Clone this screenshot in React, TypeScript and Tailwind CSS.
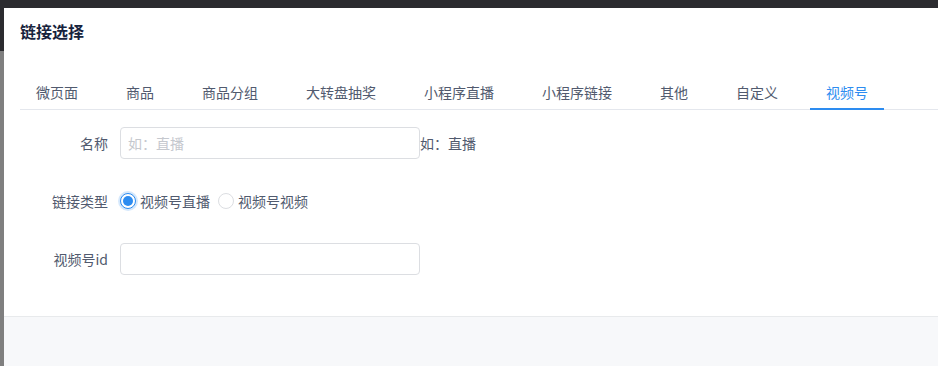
import React from 'react';

const TABS = ['微页面', '商品', '商品分组', '大转盘抽奖', '小程序直播', '小程序链接', '其他', '自定义', '视频号'];

const Radio: React.FC<{ checked?: boolean; label: string }> = ({ checked, label }) => (
  <label className="flex items-center gap-1 mr-2">
    {checked ? (
      <span className="flex items-center justify-center w-4 h-4 rounded-full border border-[#2d8cf0] bg-white shadow-[0_0_0_2px_rgba(45,140,240,0.2)]">
        <span className="w-[10px] h-[10px] rounded-full bg-[#2d8cf0]" />
      </span>
    ) : (
      <span className="w-4 h-4 rounded-full border border-[#dcdee2] bg-white" />
    )}
    <span className="text-sm text-[#515a6e]">{label}</span>
  </label>
);

const App: React.FC = () => {
  return (
    <div
      className="w-[938px] h-[366px] bg-[#2b2b2f] overflow-hidden flex flex-col"
      style={{ fontFamily: '"Noto Sans CJK SC", "Noto Sans", sans-serif' }}
    >
      <div className="h-2 shrink-0" />
      <div className="flex flex-1">
        <div className="w-1 shrink-0 flex flex-col">
          <div className="h-[43px] bg-[#2b2b2f]" />
          <div className="flex-1 bg-[#7f7f7f]" />
        </div>
        <div className="flex-1 flex flex-col bg-white">
          <div className="px-4 pt-[11px] h-[52px]">
            <h2 className="text-base font-bold text-[#17233d] leading-[24px]">链接选择</h2>
          </div>
          {/* tabs */}
          <div className="pl-4 pt-[21px]">
            <div className="flex gap-4 border-b border-[#e4e7ed]">
              {TABS.map((t) => {
                const active = t === '视频号';
                return (
                  <div
                    key={t}
                    className={`px-4 h-[29px] flex items-start text-sm leading-[22px] border-b-2 -mb-px ${
                      active ? 'text-[#2d8cf0] border-[#2d8cf0]' : 'text-[#515a6e] border-transparent'
                    }`}
                  >
                    {t}
                  </div>
                );
              })}
            </div>
          </div>
          {/* form */}
          <div className="px-4 pt-[17px] flex flex-col gap-[26px] h-[206px]">
            <div className="flex items-center h-8">
              <div className="w-[100px] pr-3 text-right text-sm text-[#515a6e]">名称</div>
              <input
                className="w-[300px] h-8 px-[7px] rounded border border-[#dcdee2] text-sm text-[#515a6e] placeholder:text-[#c5c8ce] outline-none"
                placeholder="如：直播"
              />
              <span className="text-sm text-[#515a6e]">如：直播</span>
            </div>
            <div className="flex items-center h-8">
              <div className="w-[100px] pr-3 text-right text-sm text-[#515a6e]">链接类型</div>
              <Radio checked label="视频号直播" />
              <Radio label="视频号视频" />
            </div>
            <div className="flex items-center h-8">
              <div className="w-[100px] pr-3 text-right text-sm text-[#515a6e]">视频号id</div>
              <input className="w-[300px] h-8 px-[7px] rounded border border-[#dcdee2] text-sm outline-none" />
            </div>
          </div>
          <div className="flex-1 bg-[#f7f8fa] border-t border-[#e8eaec]" />
        </div>
      </div>
    </div>
  );
};

export default App;
